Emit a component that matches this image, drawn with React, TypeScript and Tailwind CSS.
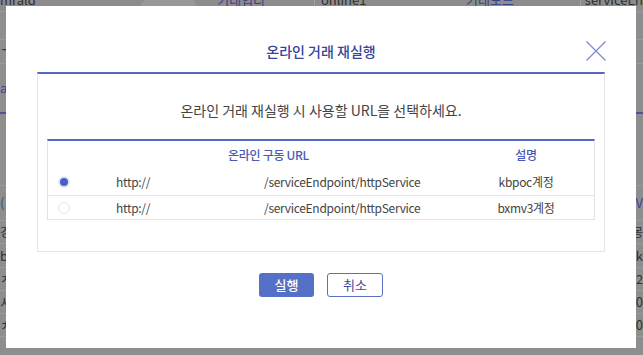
import { useState } from "react";

const rows = [
  { id: 1, desc: "kbpoc계정" },
  { id: 2, desc: "bxmv3계정" },
];

function BgPage() {
  // faded page behind the dialog
  return (
    <div className="flex flex-col text-[13px] text-[#2f2f2f]">
      <div className="h-[22px] flex items-start -mt-[10px] bg-[#8c8c8c] border-b border-[#9a9a9a]">
        <span className="w-[148px] pl-0">mrald</span>
        <span className="w-[60px] h-[22px] rounded-t-[14px] bg-[#979797] mt-[6px]"></span>
        <span className="w-[122px] pl-[20px] text-[#38408a]">기대입니</span>
        <span className="w-[160px] border-l border-[#a4a4a4] pl-[6px]">online1</span>
        <span className="w-[120px] text-[#38408a]">기대노드</span>
        <span className="flex-1 border-l border-[#a4a4a4] pl-[4px]">serviceEn</span>
      </div>
      <div className="h-[28px] bg-[#8e8e8e] border-b border-[#9b9b9b]"></div>
      <div className="h-[24px] flex justify-between bg-[#8e8e8e] border-b border-[#9b9b9b] text-[12px] px-[1px]">
        <span>ᅲ_</span>
        <span></span>
      </div>
      <div className="h-[50px] flex justify-between items-center border-b-2 border-[#4a549a] bg-[#8e8e8e]">
        <span className="text-[#3b4490]">av</span>
        <span></span>
      </div>
      <div className="h-[72px] border-b border-[#9b9b9b]"></div>
      <div className="h-[35px] flex justify-between items-center border-b border-[#9b9b9b] text-[#3b4490]">
        <span>(</span>
        <span>(V</span>
      </div>
      <div className="h-[23px] flex justify-between items-center border-b border-[#9b9b9b] text-[12px]">
        <span>경</span>
        <span>몽</span>
      </div>
      <div className="h-[24px] flex justify-between items-center border-b border-[#9b9b9b]">
        <span>b</span>
        <span>sk</span>
      </div>
      <div className="h-[23px] flex justify-between items-center border-b border-[#9b9b9b] text-[12px]">
        <span>ㅈ</span>
        <span>2</span>
      </div>
      <div className="h-[23px] flex justify-between items-center border-b border-[#9b9b9b]">
        <span>시</span>
        <span>0</span>
      </div>
      <div className="h-[23px] flex justify-between items-center border-b border-[#9b9b9b]">
        <span>ㅊ</span>
        <span>0</span>
      </div>
    </div>
  );
}

export default function App() {
  const [sel, setSel] = useState(1);

  return (
    <div className="relative w-[643px] h-[355px] overflow-hidden bg-[#8e8e8e] font-['Noto_Sans_CJK_KR','Noto_Sans',sans-serif]">
      <BgPage />

      <div className="absolute left-[6px] top-[6px] w-[630px] h-[342px] bg-white px-[31px]">
        <div className="relative h-[66px] flex items-end justify-center pb-[11px]">
          <h2 className="text-[14px] leading-[20px] font-medium text-[#33449b]">온라인 거래 재실행</h2>
          <button className="absolute right-[-1px] top-[35px] w-[20px] h-[20px]" aria-label="닫기">
            <svg width="20" height="20" viewBox="0 0 20 20">
              <path d="M0.5 0.5 L19.5 19.5 M19.5 0.5 L0.5 19.5" stroke="#7f8bd3" strokeWidth="1.3" fill="none" />
            </svg>
          </button>
        </div>

        <div className="border-t-2 border-t-[#5467c1] border-x border-b border-[#e6e6e6] h-[180px] px-[9px] pt-[25px]">
          <p className="text-center text-[14px] leading-[22px] text-[#444]">
            온라인 거래 재실행 시 사용할 URL을 선택하세요.
          </p>

          <div className="mt-[18px] border-t-2 border-t-[#5467c1] border-x border-b border-[#e3e3e3] text-[12px] tracking-[-0.3px] text-[#444]">
            <div className="flex h-[28px] items-center text-[#4a5ab8] font-medium">
              <div className="w-[31px]"></div>
              <div className="w-[379px] text-center">온라인 구동 URL</div>
              <div className="flex-1 text-center">설명</div>
            </div>
            {rows.map((r, i) => (
              <div
                key={r.id}
                onClick={() => setSel(r.id)}
                className={
                  i === 0
                    ? "flex h-[26px] items-center cursor-pointer"
                    : "flex h-[24px] items-center border-t border-[#e6e6e6] cursor-pointer"
                }
              >
                <div className="w-[31px] flex justify-center">
                  {sel === r.id ? (
                    <span className="w-[12px] h-[12px] rounded-full bg-[#e3e6f5] flex items-center justify-center">
                      <span className="w-[8px] h-[8px] rounded-full bg-[#4b5fc4]"></span>
                    </span>
                  ) : (
                    <span className="w-[12px] h-[12px] rounded-full border border-[#e4e4e4] bg-white"></span>
                  )}
                </div>
                <div className="w-[379px] flex pl-[37px]">
                  <span className="w-[148px]">http://</span>
                  <span>/serviceEndpoint/httpService</span>
                </div>
                <div className="flex-1 text-center">{r.desc}</div>
              </div>
            ))}
          </div>
        </div>

        <div className="flex justify-center gap-[13px] mt-[21px]">
          <button className="w-[55px] h-[24px] rounded-[3px] bg-[#5571c7] text-white text-[13px] font-medium">실행</button>
          <button className="w-[56px] h-[24px] rounded-[3px] border border-[#5a6fc6] bg-white text-[#3b4a9e] text-[13px]">취소</button>
        </div>
      </div>
    </div>
  );
}
